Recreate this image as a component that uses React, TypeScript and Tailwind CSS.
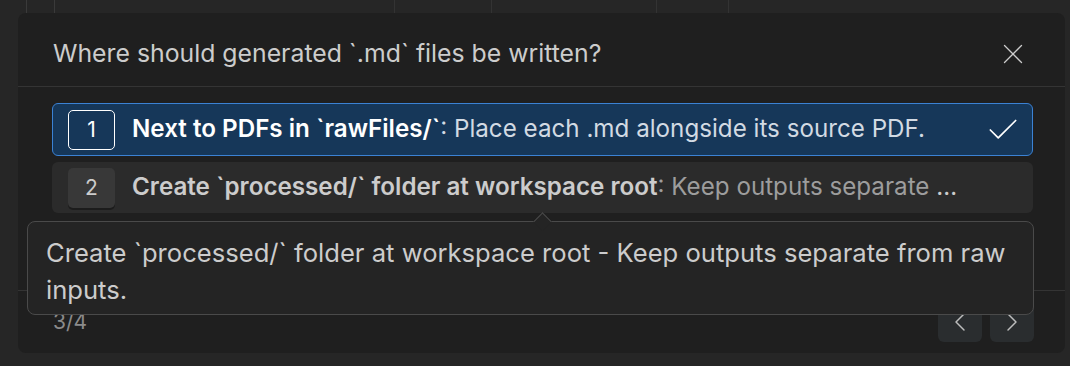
import React from 'react';
import { Check, X, ChevronLeft, ChevronRight } from 'lucide-react';

const options = [
  {
    n: 1,
    label: 'Next to PDFs in `rawFiles/`',
    detail: 'Place each .md alongside its source PDF.',
    selected: true,
  },
  {
    n: 2,
    label: 'Create `processed/` folder at workspace root',
    detail: 'Keep outputs separate from raw inputs.',
    selected: false,
  },
];

export default function App() {
  return (
    <div
      className="relative w-[1070px] h-[366px] overflow-hidden bg-[#262626] text-[#cccccc]"
      style={{ fontFamily: 'Inter, "Noto Sans", sans-serif' }}
    >
      {/* strip of the editor behind the dialog */}
      <div className="flex h-[13px]">
        <div className="w-[27px] border-r border-[#3a3a3a]" />
        <div className="w-[28px] border-r border-[#3a3a3a]" />
        <div className="w-[340px] border-r border-[#333]" />
        <div className="w-[97px] border-r border-[#333]" />
        <div className="w-[165px] border-r border-[#333]" />
        <div className="w-[72px] border-r border-[#333]" />
      </div>

      <div className="ml-[18px] w-[1047px] h-[340px] rounded-lg bg-[#1f1f1f] flex flex-col">
        {/* header */}
        <div className="h-[73px] flex items-center justify-between pt-[9px] pl-[35px] pr-[35px]">
          <span className="text-[24.8px] text-[#cccccc]">
            Where should generated `.md` files be written?
          </span>
          <X size={34} strokeWidth={0.9} className="text-[#cccccc]" />
        </div>
        <div className="h-px bg-[#343434]" />

        {/* options */}
        <div className="flex flex-col gap-[6px] pt-[16px] pl-[34px] pr-[32px] h-[203px]">
          {options.map((o) =>
            o.selected ? (
              <div
                key={o.n}
                className="h-[53px] rounded-[6px] border border-[#3b82d4] bg-[#163759] flex items-center pl-[15px] pr-[10px]"
              >
                <div className="w-[47px] h-[40px] rounded-[5px] border-[1.5px] border-white flex items-center justify-center text-[21px] text-white">
                  {o.n}
                </div>
                <div className="ml-[17px] flex-1 truncate text-[24.2px]">
                  <span className="font-semibold text-white">{o.label}</span>
                  <span className="text-[#d2dae3]">: {o.detail}</span>
                </div>
                <Check size={38} strokeWidth={1.1} className="text-white" />
              </div>
            ) : (
              <div
                key={o.n}
                className="h-[51px] rounded-[6px] bg-[#2b2b2b] flex items-center pl-[16px] pr-[71px]"
              >
                <div className="w-[47px] h-[40px] rounded-[5px] bg-[#383838] shadow-[0_2px_0_#1c1c1c] flex items-center justify-center text-[21px] text-[#cccccc]">
                  {o.n}
                </div>
                <div className="ml-[17px] flex-1 min-w-0 truncate text-[24.2px]">
                  <span className="font-semibold text-[#cccccc]">{o.label}</span>
                  <span className="text-[#9d9d9d]">: {o.detail}</span>
                </div>
              </div>
            )
          )}
        </div>
        <div className="h-px bg-[#343434]" />

        {/* footer */}
        <div className="flex-1 flex items-center justify-between pl-[35px] pr-[31px] py-[8px]">
          <span className="text-[21px] text-[#8b8b8b]">3/4</span>
          <div className="flex gap-[8px]">
            <div className="w-[44px] h-[40px] rounded-[6px] bg-[#2a2d2f] flex items-center justify-center">
              <ChevronLeft size={32} strokeWidth={1.1} className="text-[#bdbdbd]" />
            </div>
            <div className="w-[44px] h-[40px] rounded-[6px] bg-[#2a2d2f] flex items-center justify-center">
              <ChevronRight size={32} strokeWidth={1.1} className="text-[#bdbdbd]" />
            </div>
          </div>
        </div>
      </div>

      {/* hover tooltip */}
      <div className="absolute left-[27px] top-[221px] w-[1007px] h-[94px] rounded-[8px] border border-[#4a4a4a] bg-[#242424] pl-[18px] pr-[10px] pt-[12px] text-[25.6px] leading-[37px] text-[#cccccc]">
        <div className="absolute -top-[7px] left-[508px] w-[13px] h-[13px] rotate-45 bg-[#242424] border-l border-t border-[#4a4a4a]" />
        Create `processed/` folder at workspace root - Keep outputs separate from raw inputs.
      </div>
    </div>
  );
}
